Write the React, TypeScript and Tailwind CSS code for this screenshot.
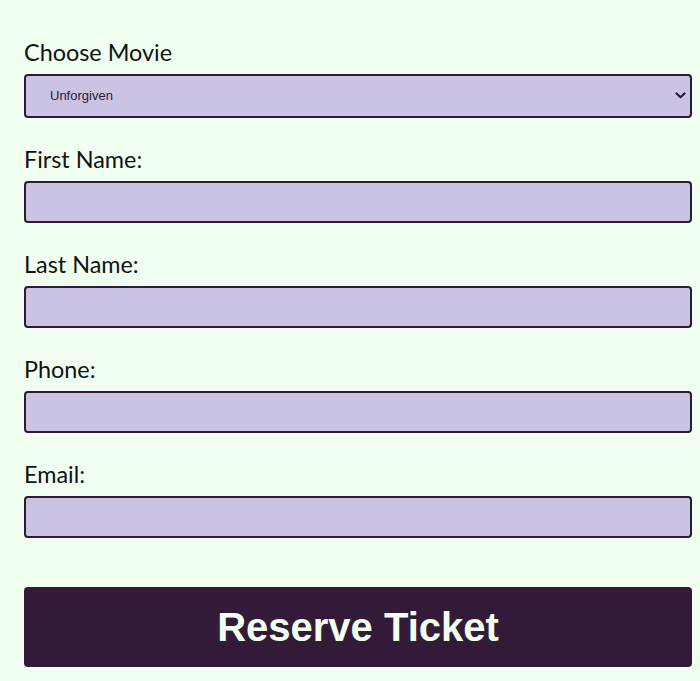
import React from "react";

const fields = ["First Name:", "Last Name:", "Phone:", "Email:"];

export default function App() {
  return (
    <div className="min-h-[681px] w-full bg-[#f0fff0] pl-[24px] pr-[8px] pt-[38px] pb-[14px] [font-family:Lato,'Noto_Sans',sans-serif]">
      <form className="flex flex-col" onSubmit={(e) => e.preventDefault()}>
        <label className="block text-[23.4px] leading-[28px] text-[#111] mb-[8px]">Choose Movie</label>
        <div className="relative">
          <select
            defaultValue="Unforgiven"
            className="w-full h-[44px] appearance-none rounded-[4px] border-2 border-[#2e1a36] bg-[#cbc3e3] pl-[24px] text-[13px] text-[#2e1a36] outline-none [font-family:'Liberation_Sans',Arial,sans-serif]"
          >
            <option>Unforgiven</option>
            <option>The Godfather</option>
            <option>Casablanca</option>
          </select>
          <svg
            className="pointer-events-none absolute right-[6px] top-[18px]"
            width="11"
            height="7"
            viewBox="0 0 11 7"
            fill="none"
          >
            <path d="M1.5 1.5 L5.5 5.2 L9.5 1.5" stroke="#2e1a36" strokeWidth="2.2" strokeLinecap="round" strokeLinejoin="round" />
          </svg>
        </div>
        {fields.map((f) => (
          <div key={f} className="flex flex-col">
            <label className="block text-[23.4px] leading-[28px] text-[#111] mt-[27px] mb-[8px]">{f}</label>
            <input
              type="text"
              className="w-full h-[42px] rounded-[4px] border-2 border-[#2e1a36] bg-[#cbc3e3] px-[10px] outline-none"
            />
          </div>
        ))}
        <button
          type="submit"
          className="mt-[49px] h-[80px] w-full rounded-[4px] bg-[#321a38] text-[40px] font-bold text-[#f0fff0] [font-family:'Liberation_Sans',Arial,sans-serif]"
        >
          Reserve Ticket
        </button>
      </form>
    </div>
  );
}
